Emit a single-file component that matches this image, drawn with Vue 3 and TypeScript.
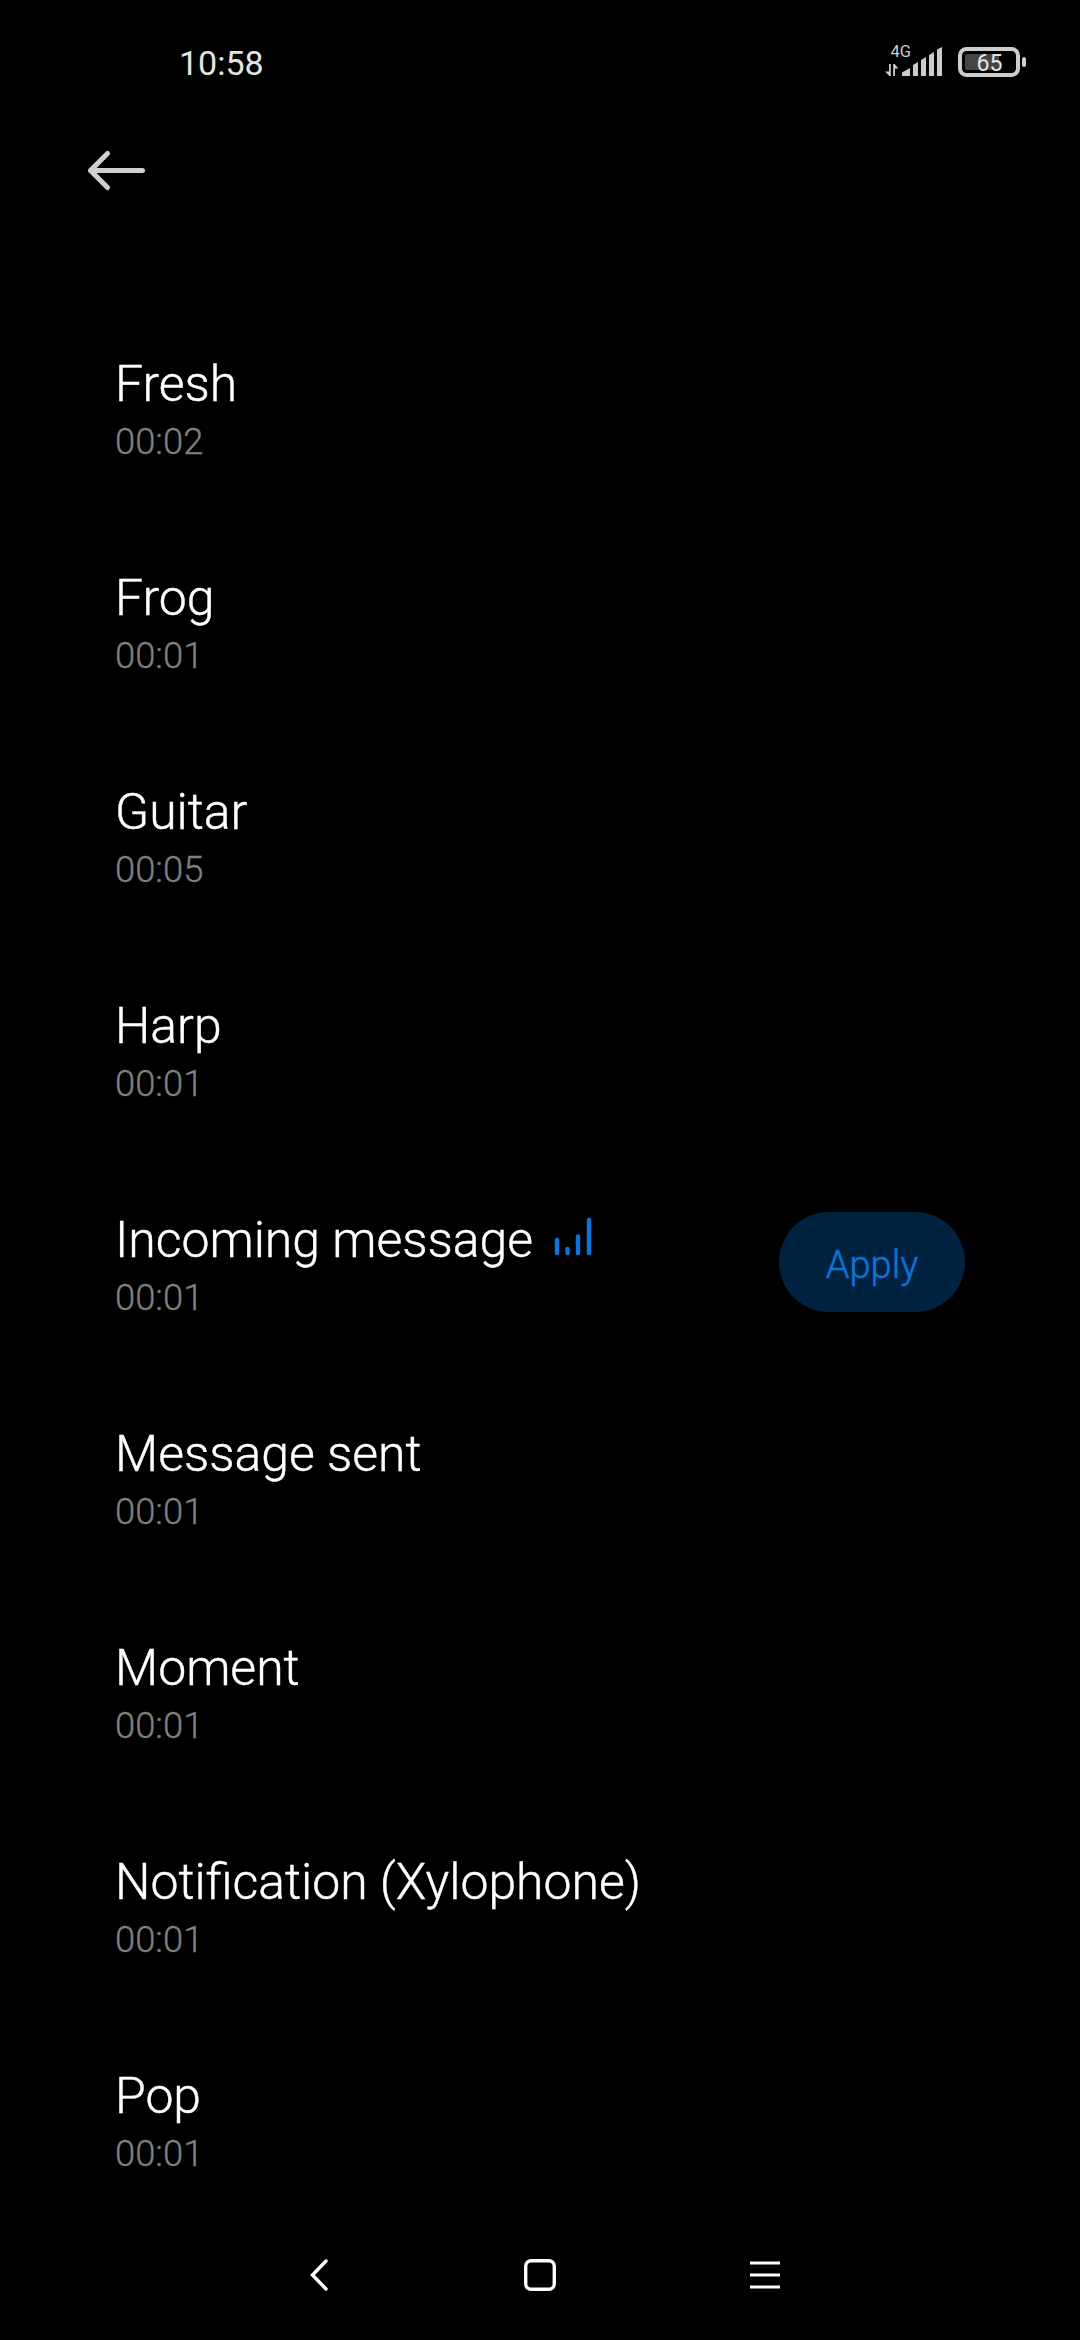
<script setup lang="ts">
interface Sound { name: string; duration: string; playing?: boolean }
const sounds: Sound[] = [
  { name: 'Fresh', duration: '00:02' },
  { name: 'Frog', duration: '00:01' },
  { name: 'Guitar', duration: '00:05' },
  { name: 'Harp', duration: '00:01' },
  { name: 'Incoming message', duration: '00:01', playing: true },
  { name: 'Message sent', duration: '00:01' },
  { name: 'Moment', duration: '00:01' },
  { name: 'Notification (Xylophone)', duration: '00:01' },
  { name: 'Pop', duration: '00:01' },
]
</script>

<template>
  <div class="screen">
    <header class="status">
      <span class="clock">10:58</span>
      <svg class="signal" width="60" height="40" viewBox="0 0 60 40">
        <text x="5.500" y="15" font-size="16.500" fill="#ccc">4G</text>
        <path d="M4 22h1.800v12H4.500L0 29.500h4zM8.200 34V22h1.500l3.500 4.500H10V34z" fill="#ccc" />
        <path d="M17 34v-3.500l8-4.500v8zM28 34V23l5-3v14zM36 34V18l5-3v19zM44 34V13l5-3v24zM52 34V7.500l5-2.500v29z" fill="#ccc" />
      </svg>
      <svg class="battery" width="70" height="30" viewBox="0 0 70 30">
        <rect x="2" y="2" width="58" height="26" rx="6.500" fill="none" stroke="#ccc" stroke-width="4" />
        <rect x="7" y="7" width="34" height="16" rx="2.500" fill="#444" />
        <rect x="64" y="10" width="4" height="10" rx="2" fill="#ccc" />
        <text x="31.500" y="24" font-size="23" text-anchor="middle" fill="#e4e4e4">65</text>
      </svg>
    </header>
    <div class="toolbar">
      <svg width="60" height="45" viewBox="0 0 60 45"><path d="M21.500 5.500L4.500 22.500l17 17M4.500 22.500h52" fill="none" stroke="#d0d0d0" stroke-width="5" stroke-linecap="round" stroke-linejoin="round" /></svg>
    </div>
    <main class="list">
      <div v-for="s in sounds" :key="s.name" class="row">
        <div class="info">
          <div class="name"><span>{{ s.name }}</span>
            <svg v-if="s.playing" class="bars" width="38" height="42" viewBox="0 0 38 42"><path d="M3 25v13M13.500 34v4M24 21.500v16.500M35 5v33" stroke="#0b74d6" stroke-width="4.400" stroke-linecap="round" /></svg>
          </div>
          <div class="time">{{ s.duration }}</div>
        </div>
        <button v-if="s.playing" class="apply">Apply</button>
      </div>
    </main>
    <nav class="nav">
      <svg width="40" height="40" viewBox="0 0 40 40"><path d="M26 6L12.500 20L26 34" stroke-linecap="round" /></svg>
      <svg width="40" height="40" viewBox="0 0 40 40"><rect x="5.700" y="5.700" width="28.600" height="28.600" rx="5.500" /></svg>
      <svg width="50" height="40" viewBox="0 0 50 40"><path d="M10 8h30M10 20h30M10 32h30" stroke-width="3" /></svg>
    </nav>
  </div>
</template>

<style>
body { background: #000; }
</style>
<style scoped>
.screen { width: 1080px; height: 2340px; overflow: hidden; background: #000; color: #fff; font-family: Roboto, sans-serif; display: flex; flex-direction: column; }
.status { height: 124px; flex: none; display: flex; align-items: center; padding-left: 179px; box-sizing: border-box; }
.clock { font-size: 34px; width: 706px; padding-top: 2px; color: #e4e4e4; }
.battery { margin-left: 13px; }
.toolbar { height: 186px; flex: none; padding: 24px 0 0 86px; box-sizing: border-box; }
.list { height: 1890px; flex: none; overflow: hidden; }
.row { height: 214px; box-sizing: border-box; padding: 44px 115px 0 115px; display: flex; justify-content: space-between; }
.name { font-size: 49.9px; font-weight: 300; line-height: 60px; display: flex; white-space: pre; -webkit-text-stroke: 0.4px #fff; }
.bars { margin: 5px 0 0 21px; }
.time { font-size: 36.4px; font-weight: 300; line-height: 42px; margin-top: 7px; color: #808080; -webkit-text-stroke: 0.3px #808080; }
.apply { width: 186px; height: 100px; margin-top: 2px; border: 0; border-radius: 50px; background: #002241; color: #0b74d6; font: 300 38px Roboto, sans-serif; padding: 5px 0 0; -webkit-text-stroke: 0.5px #0b74d6; }
.nav { flex: 1; display: flex; gap: 180px; padding: 55px 0 0 300px; }
.nav svg { fill: none; stroke: #fff; stroke-width: 3.4; }
</style>
